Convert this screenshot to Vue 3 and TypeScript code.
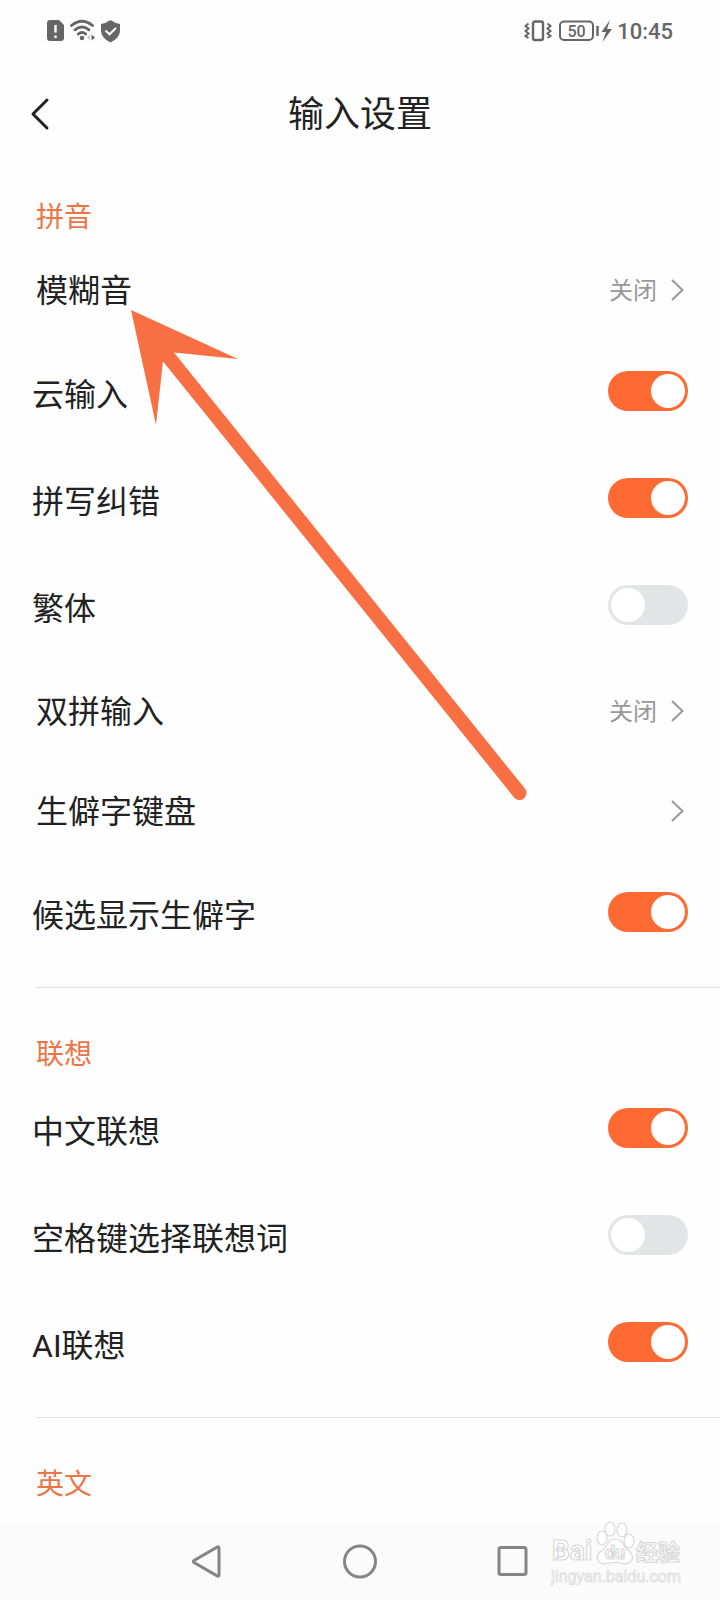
<script setup lang="ts">
import { reactive } from 'vue'

interface Row {
  id: string
  label: string
  kind: 'switch' | 'link'
  on?: boolean
  value?: string
}

interface Section {
  title: string
  rows: Row[]
}

const sections = reactive<Section[]>([
  {
    title: '拼音',
    rows: [
      { id: 'fuzzy', label: '模糊音', kind: 'link', value: '关闭' },
      { id: 'cloud', label: '云输入', kind: 'switch', on: true },
      { id: 'spelling', label: '拼写纠错', kind: 'switch', on: true },
      { id: 'traditional', label: '繁体', kind: 'switch', on: false },
      { id: 'double', label: '双拼输入', kind: 'link', value: '关闭' },
      { id: 'rare-keyboard', label: '生僻字键盘', kind: 'link' },
      { id: 'rare-candidates', label: '候选显示生僻字', kind: 'switch', on: true },
    ],
  },
  {
    title: '联想',
    rows: [
      { id: 'chinese', label: '中文联想', kind: 'switch', on: true },
      { id: 'space', label: '空格键选择联想词', kind: 'switch', on: false },
      { id: 'ai', label: 'AI联想', kind: 'switch', on: true },
    ],
  },
  { title: '英文', rows: [] },
])
</script>

<template>
  <div class="page">
    <div class="status">
      <svg class="status-left" width="76" height="24" viewBox="0 0 76 24" aria-hidden="true">
        <path d="M3 1h9l5 5v13a3 3 0 0 1-3 3H3a3 3 0 0 1-3-3V4a3 3 0 0 1 3-3z" fill="#666" />
        <path d="M8.500 6v7.500M8.500 16.500v2.500" stroke="#fff" stroke-width="2.400" />
        <g fill="none" stroke="#666" stroke-width="2.800" stroke-linecap="round">
          <path d="M24.500 6.500q10.500-8.500 21 0" />
          <path d="M28 10.800q7-5.600 14 0" />
          <path d="M31.300 15q3.700-3 7.400 0" />
        </g>
        <circle cx="35" cy="19" r="2.300" fill="#666" />
        <path d="M44.500 15.500v6l3.500-3z" fill="#666" />
        <path d="M43 15.500v6l-3-3z" fill="#ccc" />
        <path d="M63.500 1q5 3.500 9.500 4v6.500q0 7.500-9.500 12q-9.500-4.500-9.500-12V5q4.500-.5 9.500-4z" fill="#666" />
        <path d="M58.500 11.500l4 3.800 6.500-6.300" fill="none" stroke="#fff" stroke-width="2" />
      </svg>
      <div class="status-right">
        <svg width="89" height="24" viewBox="0 0 89 24" aria-hidden="true">
          <g fill="none" stroke="#666" stroke-width="2">
            <rect x="9" y="2.500" width="10" height="18.500" rx="2" stroke-width="2.400" />
            <path d="M4.500 4.500l-3 2.500 3 2.500-3 2.500 3 2.500-3 2.500 3 2" />
            <path d="M23.500 4.500l3 2.500-3 2.500 3 2.500-3 2.500 3 2.500-3 2" />
            <rect x="36" y="2.500" width="33" height="18.500" rx="4" />
            <path d="M73.500 7v10" stroke-width="2.400" />
          </g>
          <text x="52.500" y="17.500" text-anchor="middle" font-size="16" font-weight="500" fill="#666">50</text>
          <path d="M86 1l-8.500 12h4.500l-3.500 10 9.500-13h-5z" fill="#666" />
        </svg>
        <span class="time">10:45</span>
      </div>
    </div>

    <header class="header">
      <button class="back" type="button" aria-label="返回">
        <svg width="20" height="34" viewBox="0 0 20 34">
          <path d="M17 3L3 17l14 14" fill="none" stroke="#222" stroke-width="3" stroke-linecap="round" stroke-linejoin="round" />
        </svg>
      </button>
      <h1>输入设置</h1>
    </header>

    <main>
      <section v-for="s in sections" :key="s.title" class="section">
        <h2>{{ s.title }}</h2>
        <template v-for="r in s.rows" :key="r.id">
          <div v-if="r.kind === 'switch'" class="row switch-row">
            <label :for="r.id">{{ r.label }}</label>
            <input :id="r.id" v-model="r.on" class="switch" type="checkbox" role="switch" />
          </div>
          <a v-else class="row link-row" href="#">
            <span class="name">{{ r.label }}</span>
            <span v-if="r.value" class="value">{{ r.value }}</span>
            <svg width="14" height="24" viewBox="0 0 14 24" aria-hidden="true">
              <path d="M2 2l10.500 10L2 22" fill="none" stroke="#999" stroke-width="2" />
            </svg>
          </a>
        </template>
      </section>
    </main>

    <nav class="nav">
      <button type="button" aria-label="后退">
        <svg width="32" height="36" viewBox="0 0 32 36"><path d="M28 4v27q0 1.500-1.500 1L3 18.500q-1.300-1 0-2L26.500 3q1.500-.5 1.500 1z" fill="none" stroke="#858585" stroke-width="3" /></svg>
      </button>
      <button type="button" aria-label="主页">
        <svg width="36" height="36" viewBox="0 0 36 36"><circle cx="18" cy="17.500" r="15.500" fill="none" stroke="#858585" stroke-width="3" /></svg>
      </button>
      <button type="button" aria-label="最近任务">
        <svg width="32" height="32" viewBox="0 0 32 32"><rect x="2" y="1.500" width="27" height="27" rx="2" fill="none" stroke="#858585" stroke-width="3" /></svg>
      </button>
      <svg class="watermark" width="132" height="68" viewBox="0 0 132 68" aria-hidden="true">
        <g fill="#fff" stroke="#d9d9d9" stroke-width="1.200">
          <text x="2" y="40" font-size="28" font-weight="700">Bai</text>
          <ellipse cx="52" cy="18" rx="5" ry="7" />
          <ellipse cx="60" cy="9" rx="5" ry="7" />
          <ellipse cx="72" cy="10" rx="5" ry="7" />
          <ellipse cx="79" cy="21" rx="5" ry="7" />
          <path d="M65 19q6 0 9 6 2 4 6 7 5 6 0 10-4 3-9 1-6-1-12 0-6 2-10-1-4-5 1-10 5-3 7-7 3-6 8-6z" />
          <text x="65" y="39" text-anchor="middle" font-size="18" font-weight="700">du</text>
          <text x="86" y="40" font-size="22" font-weight="700">经验</text>
        </g>
        <text x="66" y="62" text-anchor="middle" font-size="16" fill="#fff" stroke="#e2e2e2" stroke-width="1">jingyan.baidu.com</text>
      </svg>
    </nav>

    <svg class="pointer" width="410" height="500" viewBox="0 0 410 500" aria-hidden="true">
      <path d="M1 0L108 49L44 42.500L33 51L26 115z" fill="#f76f42" />
      <path d="M38.500 47L389.500 483" stroke="#f76f42" stroke-width="14" stroke-linecap="round" />
    </svg>
  </div>
</template>

<style>
body {
  margin: 0;
  background: #fefefe;
}
</style>

<style scoped>
.page {
  position: relative;
  display: flex;
  flex-direction: column;
  min-height: 100vh;
  background: #fefefe;
  color: #222;
  font-family: Roboto, "Noto Sans CJK SC", sans-serif;
}
.page *,
.page *::before {
  box-sizing: border-box;
}
svg {
  display: block;
  flex: none;
}
button {
  display: flex;
  align-items: center;
  justify-content: center;
  padding: 0;
  border: 0;
  background: none;
}
.status {
  display: flex;
  align-items: center;
  justify-content: space-between;
  height: 62px;
  padding: 0 47px;
  color: #666;
}
.status-right {
  display: flex;
  align-items: center;
  gap: 4px;
}
.time {
  padding-top: 2px;
  font-size: 22px;
  line-height: 24px;
  font-weight: 500;
}
.header {
  display: grid;
  grid-template-columns: 40px 1fr 40px;
  align-items: center;
  height: 104px;
  padding: 0 20px;
}
.back {
  width: 40px;
  height: 48px;
}
h1 {
  margin: 0;
  padding-top: 2px;
  font-size: 36px;
  line-height: 48px;
  font-weight: 400;
  text-align: center;
}
.section {
  margin-left: 36px;
  padding: 43px 0 19px;
  border-top: 1px solid #e0e0e0;
}
.section:first-child {
  padding-top: 27px;
  border-top-color: transparent;
}
.section:last-child {
  padding-bottom: 0;
}
h2 {
  margin: 0;
  padding-top: 2px;
  font-size: 28px;
  line-height: 44px;
  font-weight: 400;
  color: #ec7445;
}
.row {
  display: flex;
  align-items: center;
  font-size: 32px;
  line-height: 48px;
  color: #222;
}
.link-row {
  height: 100px;
  padding-right: 36px;
  text-decoration: none;
}
.name {
  flex: 1;
  padding-top: 2px;
}
.value {
  padding-top: 2px;
  margin-right: 13px;
  font-size: 24px;
  color: #999;
}
.switch-row {
  justify-content: space-between;
  height: 107px;
  margin-left: -4px;
  padding: 0 32px 5px 0;
}
.switch-row label {
  padding-top: 8px;
}
.switch {
  appearance: none;
  width: 80px;
  height: 40px;
  margin: 0;
  padding: 3px;
  border-radius: 20px;
  background: #e2e4e6;
}
.switch::before {
  content: "";
  display: block;
  width: 34px;
  height: 34px;
  border-radius: 50%;
  background: #fff;
}
.switch:checked {
  background: #ff6a33;
}
.switch:checked::before {
  margin-left: auto;
}
.nav {
  position: relative;
  display: flex;
  align-items: center;
  justify-content: center;
  gap: 97px;
  height: 77px;
  margin-top: auto;
  background: #fbfbfb;
}
.nav button {
  width: 56px;
  height: 56px;
}
.watermark {
  position: absolute;
  right: 38px;
  bottom: 12px;
}
.pointer {
  position: absolute;
  top: 310px;
  left: 130px;
  pointer-events: none;
}
</style>
